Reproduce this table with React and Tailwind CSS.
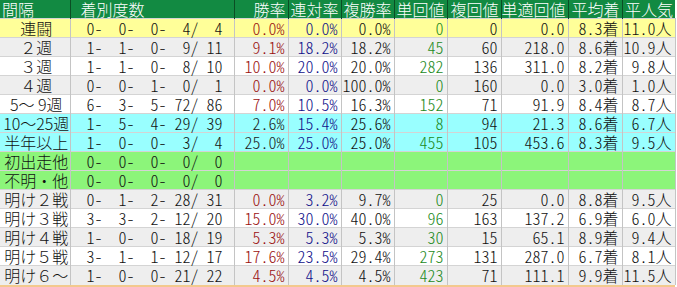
import React from 'react';

const cols = [70, 164, 54, 53, 53, 53, 54, 67, 54, 53];
const heads = ['間隔', '着別度数', '勝率', '連対率', '複勝率', '単回値', '複回値', '単適回値', '平均着', '平人気'];

const bgs = {
  y: 'bg-[#ffff99]',
  g: 'bg-[#eeeeee]',
  w: 'bg-white',
  c: 'bg-[#99ffff]',
  n: 'bg-[#8cf57a]',
};

const rows = [
  ['連闘', [0, 0, 0, 4, 4], ['0.0%', '0.0%', '0.0%', '0', '0', '0.0', '8.3着', '11.0人'], 'y'],
  ['２週', [1, 1, 0, 9, 11], ['9.1%', '18.2%', '18.2%', '45', '60', '218.0', '8.6着', '10.9人'], 'g'],
  ['３週', [1, 1, 0, 8, 10], ['10.0%', '20.0%', '20.0%', '282', '136', '311.0', '8.2着', '9.8人'], 'w'],
  ['４週', [0, 0, 1, 0, 1], ['0.0%', '0.0%', '100.0%', '0', '160', '0.0', '3.0着', '1.0人'], 'g'],
  ['5～ 9週', [6, 3, 5, 72, 86], ['7.0%', '10.5%', '16.3%', '152', '71', '91.9', '8.4着', '8.7人'], 'w'],
  ['10～25週', [1, 5, 4, 29, 39], ['2.6%', '15.4%', '25.6%', '8', '94', '21.3', '8.6着', '6.7人'], 'c'],
  ['半年以上', [1, 0, 0, 3, 4], ['25.0%', '25.0%', '25.0%', '455', '105', '453.6', '8.3着', '9.5人'], 'c'],
  ['初出走他', [0, 0, 0, 0, 0], null, 'n'],
  ['不明・他', [0, 0, 0, 0, 0], null, 'n'],
  ['明け２戦', [0, 1, 2, 28, 31], ['0.0%', '3.2%', '9.7%', '0', '25', '0.0', '8.8着', '9.5人'], 'g'],
  ['明け３戦', [3, 3, 2, 12, 20], ['15.0%', '30.0%', '40.0%', '96', '163', '137.2', '6.9着', '6.0人'], 'w'],
  ['明け４戦', [1, 0, 0, 18, 19], ['5.3%', '5.3%', '5.3%', '30', '15', '65.1', '8.9着', '9.4人'], 'g'],
  ['明け５戦', [3, 1, 1, 12, 17], ['17.6%', '23.5%', '29.4%', '273', '131', '287.0', '6.7着', '8.1人'], 'w'],
  ['明け６～', [1, 0, 0, 21, 22], ['4.5%', '4.5%', '4.5%', '423', '71', '111.1', '9.9着', '11.5人'], 'g'],
];

// text colour per stat column
const statColor = ['text-[#9a1010]', 'text-[#10108a]', 'text-[#111]', 'text-[#1c8a1c]', 'text-[#111]', 'text-[#111]', 'text-[#111]', 'text-[#111]'];

const pad2 = (n) => String(n).padStart(2, ' ');
const record = ([a, b, c, d, t]) => `${pad2(a)}- ${pad2(b)}- ${pad2(c)}- ${pad2(d)}/ ${pad2(t)}`;

const App = () => {
  return (
    <div
      className="w-[677px] h-[287px] bg-white overflow-hidden text-[16px] leading-[18px] font-light text-[#111]"
      style={{ fontFamily: '"Noto Sans CJK JP", "Noto Sans", sans-serif' }}
    >
      <table className="table-fixed border-collapse w-[675px]">
        <colgroup>
          {cols.map((w, i) => (
            <col key={i} style={{ width: w }} />
          ))}
        </colgroup>
        <thead>
          <tr className="h-[18px] bg-[#128a42] text-white">
            {heads.map((h, i) => (
              <th
                key={h}
                className={
                  'p-0 font-light whitespace-nowrap border-l border-[#0b4d24] first:border-l-0 ' +
                  (i === 0 ? 'text-left pl-[2px]' : i === 1 ? 'text-left pl-[10px]' : 'text-right pr-[2px]')
                }
              >
                {h}
              </th>
            ))}
          </tr>
        </thead>
        <tbody>
          {rows.map(([label, rec, stats, bg]) => (
            <tr key={label} className={'h-[19px] border-t border-[#d4d4d4] ' + bgs[bg]}>
              <td className="p-0 text-center pl-[3px] whitespace-nowrap border-r border-[#c4c4c4]">{label}</td>
              <td className="p-0 text-right pr-[11px] whitespace-pre border-r border-[#c4c4c4] [font-feature-settings:'hwid']">
                {record(rec)}
              </td>
              {(stats || Array(8).fill('')).map((s, i) => (
                <td
                  key={i}
                  className={
                    'p-0 text-right pr-[3px] whitespace-nowrap border-r border-[#c4c4c4] [font-feature-settings:"hwid"] ' +
                    (i === 0 && bg === 'c' ? 'text-[#222]' : statColor[i])
                  }
                >
                  {s}
                </td>
              ))}
            </tr>
          ))}
        </tbody>
      </table>
      <div className="h-[3px] w-[675px] bg-[#f3c98e]" />
    </div>
  );
};

export default App;
